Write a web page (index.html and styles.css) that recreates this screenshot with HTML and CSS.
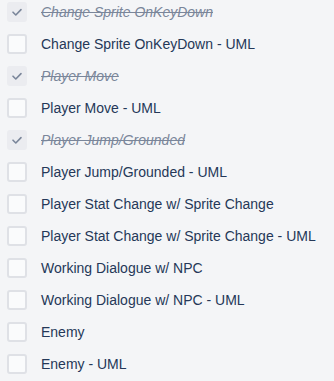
FILE: index.html
```html
<!DOCTYPE html>
<html>
<head>
<meta charset="utf-8">
<link rel="stylesheet" href="styles.css">
</head>
<body>
<ul class="list">
  <li class="item done"><span class="box"><svg viewBox="0 0 20 20" width="20" height="20"><path d="M6 10.2 L8.8 13 L14 7.6" fill="none" stroke="#7a869a" stroke-width="1.6" stroke-linecap="round" stroke-linejoin="round"/></svg></span><span class="label">Change Sprite OnKeyDown</span></li>
  <li class="item"><span class="box"></span><span class="label">Change Sprite OnKeyDown - UML</span></li>
  <li class="item done"><span class="box"><svg viewBox="0 0 20 20" width="20" height="20"><path d="M6 10.2 L8.8 13 L14 7.6" fill="none" stroke="#7a869a" stroke-width="1.6" stroke-linecap="round" stroke-linejoin="round"/></svg></span><span class="label">Player Move</span></li>
  <li class="item"><span class="box"></span><span class="label">Player Move - UML</span></li>
  <li class="item done"><span class="box"><svg viewBox="0 0 20 20" width="20" height="20"><path d="M6 10.2 L8.8 13 L14 7.6" fill="none" stroke="#7a869a" stroke-width="1.6" stroke-linecap="round" stroke-linejoin="round"/></svg></span><span class="label">Player Jump/Grounded</span></li>
  <li class="item"><span class="box"></span><span class="label">Player Jump/Grounded - UML</span></li>
  <li class="item"><span class="box"></span><span class="label">Player Stat Change w/ Sprite Change</span></li>
  <li class="item"><span class="box"></span><span class="label">Player Stat Change w/ Sprite Change - UML</span></li>
  <li class="item"><span class="box"></span><span class="label">Working Dialogue w/ NPC</span></li>
  <li class="item"><span class="box"></span><span class="label">Working Dialogue w/ NPC - UML</span></li>
  <li class="item"><span class="box"></span><span class="label">Enemy</span></li>
  <li class="item"><span class="box"></span><span class="label">Enemy - UML</span></li>
</ul>
</body>
</html>
```
FILE: styles.css
```css
html, body {
  margin: 0;
  padding: 0;
  background: #f4f5f7;
}
body {
  font-family: "Liberation Sans", Arial, sans-serif;
  font-size: 14px;
  color: #253858;
  overflow: hidden;
}
.list {
  list-style: none;
  margin: -4px 0 0 0;
  padding: 0;
}
.item {
  display: flex;
  align-items: center;
  height: 32px;
  padding-left: 7px;
}
.box {
  box-sizing: border-box;
  width: 20px;
  height: 20px;
  border: 2px solid #dfe1e6;
  border-radius: 3px;
  background: #fafbfc;
  margin-right: 14px;
  flex: none;
  position: relative;
}
.done .box {
  border-color: #ebecf0;
  background: #ebecf0;
}
.box svg {
  position: absolute;
  left: -2px;
  top: -2px;
}
.label {
  white-space: nowrap;
}
.done .label {
  font-style: italic;
  text-decoration: line-through;
  color: #7a869a;
}
```
